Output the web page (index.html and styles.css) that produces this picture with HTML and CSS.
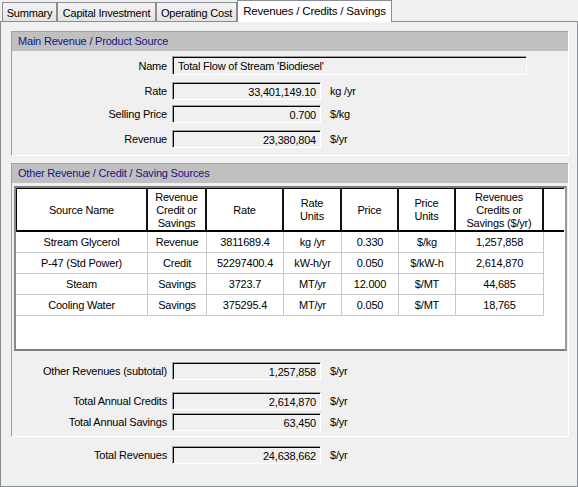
FILE: index.html
```html
<!DOCTYPE html>
<html>
<head>
<meta charset="utf-8">
<link rel="stylesheet" href="styles.css">
</head>
<body>
<div class="tabs">
  <div class="tab t1">Summary</div>
  <div class="tab t2">Capital Investment</div>
  <div class="tab t3">Operating Cost</div>
  <div class="tab active">Revenues / Credits / Savings</div>
</div>
<div class="panel">
  <div class="group g1">
    <div class="ghead">Main Revenue / Product Source</div>
    <div class="gbody">
      <div class="frow r-name"><span class="lbl">Name</span><div class="field wide">Total Flow of Stream 'Biodiesel'</div></div>
      <div class="frow r-rate"><span class="lbl">Rate</span><div class="field num">33,401,149.10</div><span class="unit">kg /yr</span></div>
      <div class="frow r-price"><span class="lbl">Selling Price</span><div class="field num">0.700</div><span class="unit">$/kg</span></div>
      <div class="frow r-rev"><span class="lbl">Revenue</span><div class="field num">23,380,804</div><span class="unit">$/yr</span></div>
    </div>
  </div>
  <div class="group g2">
    <div class="ghead">Other Revenue / Credit / Saving Sources</div>
    <div class="gbody">
      <div class="gridframe">
        <div class="grid">
          <div class="hc first">Source Name</div>
          <div class="hc">Revenue<br>Credit or<br>Savings</div>
          <div class="hc">Rate</div>
          <div class="hc">Rate<br>Units</div>
          <div class="hc">Price</div>
          <div class="hc">Price<br>Units</div>
          <div class="hc">Revenues<br>Credits or<br>Savings ($/yr)</div>
          <div class="hc fill"></div>

          <div class="dc">Stream Glycerol</div><div class="dc">Revenue</div><div class="dc">3811689.4</div><div class="dc">kg /yr</div><div class="dc">0.330</div><div class="dc">$/kg</div><div class="dc">1,257,858</div><div class="dc fill"></div>
          <div class="dc">P-47 (Std Power)</div><div class="dc">Credit</div><div class="dc">52297400.4</div><div class="dc">kW-h/yr</div><div class="dc">0.050</div><div class="dc">$/kW-h</div><div class="dc">2,614,870</div><div class="dc fill"></div>
          <div class="dc">Steam</div><div class="dc">Savings</div><div class="dc">3723.7</div><div class="dc">MT/yr</div><div class="dc">12.000</div><div class="dc">$/MT</div><div class="dc">44,685</div><div class="dc fill"></div>
          <div class="dc">Cooling Water</div><div class="dc">Savings</div><div class="dc">375295.4</div><div class="dc">MT/yr</div><div class="dc">0.050</div><div class="dc">$/MT</div><div class="dc">18,765</div><div class="dc fill"></div>
        </div>
      </div>
      <div class="frow r-sub"><span class="lbl">Other Revenues (subtotal)</span><div class="field num">1,257,858</div><span class="unit">$/yr</span></div>
      <div class="frow r-cred"><span class="lbl">Total Annual Credits</span><div class="field num">2,614,870</div><span class="unit">$/yr</span></div>
      <div class="frow r-sav"><span class="lbl">Total Annual Savings</span><div class="field num">63,450</div><span class="unit">$/yr</span></div>
    </div>
  </div>
  <div class="frow r-total"><span class="lbl">Total Revenues</span><div class="field num">24,638,662</div><span class="unit">$/yr</span></div>
</div>
</body>
</html>
```
FILE: styles.css
```css
* { box-sizing: border-box; }
html, body { margin: 0; padding: 0; }
body {
  width: 578px;
  height: 487px;
  overflow: hidden;
  background: #f0f0f0;
  font-family: "Liberation Sans", Arial, sans-serif;
  font-size: 11px;
  letter-spacing: -0.2px;
  color: #000;
}
.tabs {
  display: flex;
  align-items: flex-end;
  height: 21px;
  padding-left: 2px;
  position: relative;
  z-index: 2;
}
.tab {
  height: 19px;
  border: 1px solid #898c95;
  border-bottom: none;
  background: linear-gradient(#f4f4f4, #e4e4e4);
  display: flex;
  align-items: center;
  justify-content: center;
  font-size: 11px;
  padding-top: 1px;
}
.t1 { width: 55px; }
.t2 { width: 99px; }
.t3 { width: 81px; }
.tab.active {
  width: 155px;
  height: 22px;
  margin-bottom: -1px;
  background: #fff;
  font-size: 11.5px;
  padding-top: 0;
  padding-bottom: 2px;
}
.panel {
  height: 466px;
  border: 1px solid #898c95;
  background: #f0f0f0;
  padding: 9px 8px 0 10px;
}
.group {
  border-left: 1px solid #a0a0a0;
  border-right: 1px solid #fff;
  border-bottom: 1px solid #fff;
}
.g2 { margin-top: 7px; }
.ghead {
  height: 20px;
  border-top: 1px solid #a0a0a0;
  background: #c0c0c0;
  color: #14148a;
  padding-left: 6px;
  line-height: 18px;
}
.g1 .gbody { padding: 5px 0 7px; }
.g2 .gbody { padding: 3px 0 5px; }
.frow {
  display: flex;
  align-items: center;
  height: 18px;
}
.lbl {
  width: 155px;
  margin-right: 5px;
  text-align: right;
  white-space: nowrap;
}
.r-total .lbl { width: 156px; }
.field {
  width: 149px;
  height: 18px;
  border: 1px solid;
  border-color: #a0a0a0 #fff #fff #a0a0a0;
  box-shadow: inset 1px 1px 0 #000;
  background: #f0f0f0;
  line-height: 16px;
  padding: 1px 4px 0 5px;
  white-space: nowrap;
}
.num { text-align: right; }
.field.wide { width: 355px; height: 19px; }
.r-name { height: 19px; }
.r-rate { margin-top: 7px; }
.r-price { margin-top: 5px; }
.r-rev { margin-top: 7px; }
.unit { margin-left: 9px; }
.r-sub { margin-top: 11px; }
.r-cred { margin-top: 12px; }
.r-sav { margin-top: 3px; }
.r-total { margin-top: 9px; }
.gridframe {
  margin-left: 2px;
  width: 553px;
  height: 165px;
  border: 2px solid;
  border-color: #7d7d7d #9a9a9a #7d7d7d #8a8a8a;
  background: #fff;
}
.grid {
  display: grid;
  grid-template-columns: 132px 59px 77px 58px 57px 57px 88px 20px;
  grid-template-rows: 44px repeat(4, 21px);
}
.hc {
  border-top: 1px solid #000;
  border-bottom: 2px solid #000;
  border-right: 2px solid #111;
  display: flex;
  align-items: center;
  justify-content: center;
  text-align: center;
  line-height: 13px;
  padding-top: 1px;
}
.hc.first { border-left: 1px solid #000; }
.hc.fill { border-right: none; }
.dc {
  border-right: 1px solid #c8c8c8;
  border-bottom: 1px solid #c8c8c8;
  text-align: center;
  line-height: 20px;
  white-space: nowrap;
}
.dc.fill { border: none; }
```
